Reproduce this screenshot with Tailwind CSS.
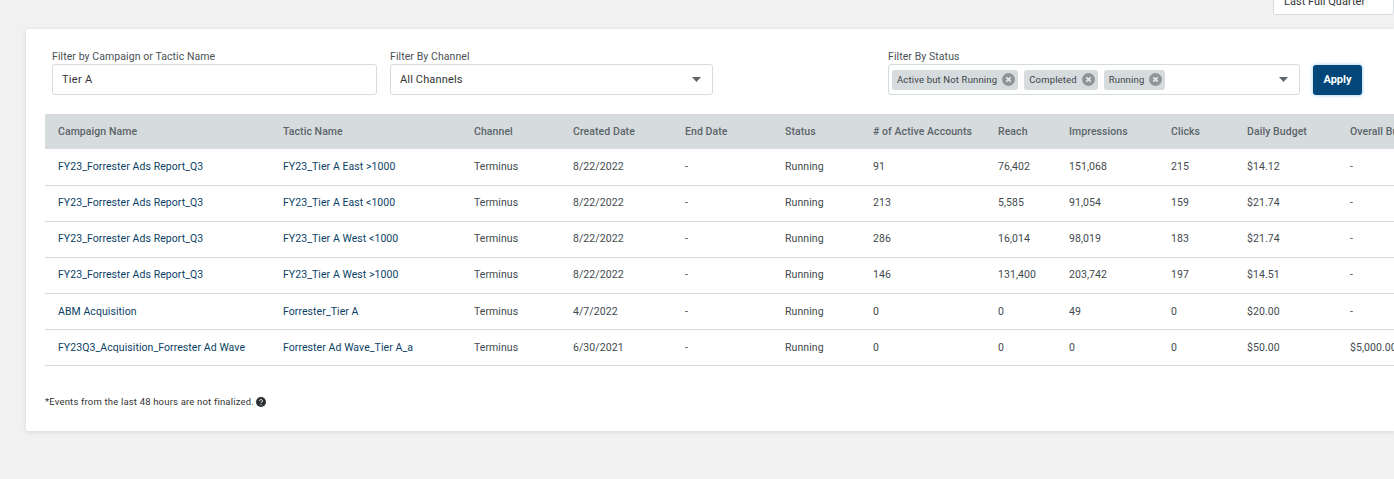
<!DOCTYPE html>
<html lang="en">
<head>
<meta charset="UTF-8">
<title>Tactics</title>
<script src="https://cdn.jsdelivr.net/npm/@tailwindcss/browser@4"></script>
</head>
<body class="bg-[#f1f1f1] font-['Roboto',sans-serif] text-[#3d4449] h-[479px] w-[1394px] overflow-hidden">
  <!-- date range dropdown, cut off by the top of the window -->
  <div class="h-[29px] flex justify-end items-start">
    <div class="w-[121px] h-[30px] -mt-[15px] pl-[10px] pt-[9px] bg-white border border-[#d6dbde] rounded-[3px] text-[11px] leading-[14px] tracking-[0.02px] text-[#333]">Last Full Quarter</div>
  </div>

  <div class="ml-[26px] h-[402px] bg-white rounded-l-[3px] shadow-[0_1px_4px_rgba(0,0,0,0.12)] overflow-hidden">
    <!-- filters -->
    <div class="flex items-end pl-[26px] pt-[21px] h-[85px] pb-[19px]">
      <div class="w-[325px]">
        <label class="block text-[10.5px] leading-[14px] tracking-[0.08px] text-[#4a5156]">Filter by Campaign or Tactic Name</label>
        <div class="h-[31px] border border-[#d6dbde] rounded-[3px] pl-[9px] pt-[1px] flex items-center text-[11px] tracking-[0.3px] text-[#333]">Tier A</div>
      </div>
      <div class="w-[323px] ml-[13px]">
        <label class="block text-[10.5px] leading-[14px] tracking-[0.08px] text-[#4a5156]">Filter By Channel</label>
        <div class="h-[31px] border border-[#d6dbde] rounded-[3px] pl-[9px] pr-[11px] flex items-center justify-between text-[11px] tracking-[0.15px] text-[#333]">
          <span class="pt-[1px]">All Channels</span>
          <svg class="w-[9px] h-[5px]" viewBox="0 0 9 5"><path d="M0 0h9L4.5 5z" fill="#5f676c"/></svg>
        </div>
      </div>
      <div class="w-[412px] ml-[175px]">
        <label class="block text-[10.5px] leading-[14px] tracking-[0.08px] text-[#4a5156]">Filter By Status</label>
        <div class="h-[31px] border border-[#d6dbde] rounded-[3px] pl-[3px] pr-[11px] flex items-center justify-between">
          <div class="flex gap-[6px] text-[9.5px] tracking-[0.16px] text-[#3d4449]">
            <span class="h-[20px] pl-[5px] pr-[3px] bg-[#d6dbde] rounded-[3px] flex items-center gap-[5px]"><span class="pt-[1px]">Active but Not Running</span>
              <svg class="w-[13px] h-[13px]" viewBox="0 0 12 12"><circle cx="6" cy="6" r="6" fill="#8f9496"/><path d="M4 4l4 4M8 4l-4 4" stroke="#e4e7e8" stroke-width="1.6"/></svg>
            </span>
            <span class="h-[20px] pl-[5px] pr-[3px] bg-[#d6dbde] rounded-[3px] flex items-center gap-[5px]"><span class="pt-[1px]">Completed</span>
              <svg class="w-[13px] h-[13px]" viewBox="0 0 12 12"><circle cx="6" cy="6" r="6" fill="#8f9496"/><path d="M4 4l4 4M8 4l-4 4" stroke="#e4e7e8" stroke-width="1.6"/></svg>
            </span>
            <span class="h-[20px] pl-[5px] pr-[3px] bg-[#d6dbde] rounded-[3px] flex items-center gap-[5px]"><span class="pt-[1px]">Running</span>
              <svg class="w-[13px] h-[13px]" viewBox="0 0 12 12"><circle cx="6" cy="6" r="6" fill="#8f9496"/><path d="M4 4l4 4M8 4l-4 4" stroke="#e4e7e8" stroke-width="1.6"/></svg>
            </span>
          </div>
          <svg class="w-[9px] h-[5px]" viewBox="0 0 9 5"><path d="M0 0h9L4.5 5z" fill="#5f676c"/></svg>
        </div>
      </div>
      <button class="ml-[13px] w-[49px] h-[30px] bg-[#03477a] rounded-[3px] text-white text-[11px] font-bold shadow-[0_0_3px_1px_rgba(90,170,230,0.4)]">Apply</button>
    </div>

    <!-- table -->
    <div class="ml-[19px] w-[1400px]">
      <table class="table-fixed w-[1400px] border-collapse text-[10.5px] tracking-[0.07px] text-left">
        <colgroup>
          <col class="w-[225px]"><col class="w-[191px]"><col class="w-[99px]"><col class="w-[112px]"><col class="w-[100px]"><col class="w-[88px]"><col class="w-[125px]"><col class="w-[71px]"><col class="w-[102px]"><col class="w-[76px]"><col class="w-[103px]"><col class="w-[108px]">
        </colgroup>
        <thead class="bg-[#d6dbde] text-[#5b6469]">
          <tr class="h-[35px]">
            <th class="pl-[13px] font-medium whitespace-nowrap">Campaign Name</th>
            <th class="pl-[13px] font-medium whitespace-nowrap">Tactic Name</th>
            <th class="pl-[13px] font-medium whitespace-nowrap">Channel</th>
            <th class="pl-[13px] font-medium whitespace-nowrap">Created Date</th>
            <th class="pl-[13px] font-medium whitespace-nowrap">End Date</th>
            <th class="pl-[13px] font-medium whitespace-nowrap">Status</th>
            <th class="pl-[13px] font-medium whitespace-nowrap"># of Active Accounts</th>
            <th class="pl-[13px] font-medium whitespace-nowrap">Reach</th>
            <th class="pl-[13px] font-medium whitespace-nowrap">Impressions</th>
            <th class="pl-[13px] font-medium whitespace-nowrap">Clicks</th>
            <th class="pl-[13px] font-medium whitespace-nowrap">Daily Budget</th>
            <th class="pl-[13px] font-medium whitespace-nowrap">Overall Budget</th>
          </tr>
        </thead>
        <tbody class="text-[#42494e]">
          <tr class="h-[36px] border-b border-[#d9d9d9]">
            <td class="pl-[13px] text-[#0b3f66]">FY23_Forrester Ads Report_Q3</td><td class="pl-[13px] text-[#0b3f66]">FY23_Tier A East &gt;1000</td><td class="pl-[13px]">Terminus</td><td class="pl-[13px]">8/22/2022</td><td class="pl-[13px]">-</td><td class="pl-[13px]">Running</td><td class="pl-[13px]">91</td><td class="pl-[13px]">76,402</td><td class="pl-[13px]">151,068</td><td class="pl-[13px]">215</td><td class="pl-[13px]">$14.12</td><td class="pl-[13px]">-</td>
          </tr>
          <tr class="h-[36px] border-b border-[#d9d9d9]">
            <td class="pl-[13px] text-[#0b3f66]">FY23_Forrester Ads Report_Q3</td><td class="pl-[13px] text-[#0b3f66]">FY23_Tier A East &lt;1000</td><td class="pl-[13px]">Terminus</td><td class="pl-[13px]">8/22/2022</td><td class="pl-[13px]">-</td><td class="pl-[13px]">Running</td><td class="pl-[13px]">213</td><td class="pl-[13px]">5,585</td><td class="pl-[13px]">91,054</td><td class="pl-[13px]">159</td><td class="pl-[13px]">$21.74</td><td class="pl-[13px]">-</td>
          </tr>
          <tr class="h-[36px] border-b border-[#d9d9d9]">
            <td class="pl-[13px] text-[#0b3f66]">FY23_Forrester Ads Report_Q3</td><td class="pl-[13px] text-[#0b3f66]">FY23_Tier A West &lt;1000</td><td class="pl-[13px]">Terminus</td><td class="pl-[13px]">8/22/2022</td><td class="pl-[13px]">-</td><td class="pl-[13px]">Running</td><td class="pl-[13px]">286</td><td class="pl-[13px]">16,014</td><td class="pl-[13px]">98,019</td><td class="pl-[13px]">183</td><td class="pl-[13px]">$21.74</td><td class="pl-[13px]">-</td>
          </tr>
          <tr class="h-[36px] border-b border-[#d9d9d9]">
            <td class="pl-[13px] text-[#0b3f66]">FY23_Forrester Ads Report_Q3</td><td class="pl-[13px] text-[#0b3f66]">FY23_Tier A West &gt;1000</td><td class="pl-[13px]">Terminus</td><td class="pl-[13px]">8/22/2022</td><td class="pl-[13px]">-</td><td class="pl-[13px]">Running</td><td class="pl-[13px]">146</td><td class="pl-[13px]">131,400</td><td class="pl-[13px]">203,742</td><td class="pl-[13px]">197</td><td class="pl-[13px]">$14.51</td><td class="pl-[13px]">-</td>
          </tr>
          <tr class="h-[36px] border-b border-[#d9d9d9] [&>td]:pt-[2px]">
            <td class="pl-[13px] text-[#0b3f66]">ABM Acquisition</td><td class="pl-[13px] text-[#0b3f66]">Forrester_Tier A</td><td class="pl-[13px]">Terminus</td><td class="pl-[13px]">4/7/2022</td><td class="pl-[13px]">-</td><td class="pl-[13px]">Running</td><td class="pl-[13px]">0</td><td class="pl-[13px]">0</td><td class="pl-[13px]">49</td><td class="pl-[13px]">0</td><td class="pl-[13px]">$20.00</td><td class="pl-[13px]">-</td>
          </tr>
          <tr class="h-[36px] border-b border-[#d9d9d9] [&>td]:pt-[2px]">
            <td class="pl-[13px] text-[#0b3f66]">FY23Q3_Acquisition_Forrester Ad Wave</td><td class="pl-[13px] text-[#0b3f66]">Forrester Ad Wave_Tier A_a</td><td class="pl-[13px]">Terminus</td><td class="pl-[13px]">6/30/2021</td><td class="pl-[13px]">-</td><td class="pl-[13px]">Running</td><td class="pl-[13px]">0</td><td class="pl-[13px]">0</td><td class="pl-[13px]">0</td><td class="pl-[13px]">0</td><td class="pl-[13px]">$50.00</td><td class="pl-[13px]">$5,000.00</td>
          </tr>
        </tbody>
      </table>
    </div>

    <div class="ml-[19px] mt-[29px] flex items-center gap-[2px] text-[9.5px] leading-[14px] tracking-[0.18px] text-[#333]">
      <span>*Events from the last 48 hours are not finalized.</span>
      <svg class="w-[10px] h-[10px]" viewBox="0 0 10 10"><circle cx="5" cy="5" r="5" fill="#2b2f33"/><path d="M3.6 3.9a1.4 1.4 0 1 1 2.2 1.1c-.5.35-.8.55-.8 1" fill="none" stroke="#fff" stroke-width="1"/><circle cx="5" cy="7.6" r=".6" fill="#fff"/></svg>
    </div>
  </div>
</body>
</html>
